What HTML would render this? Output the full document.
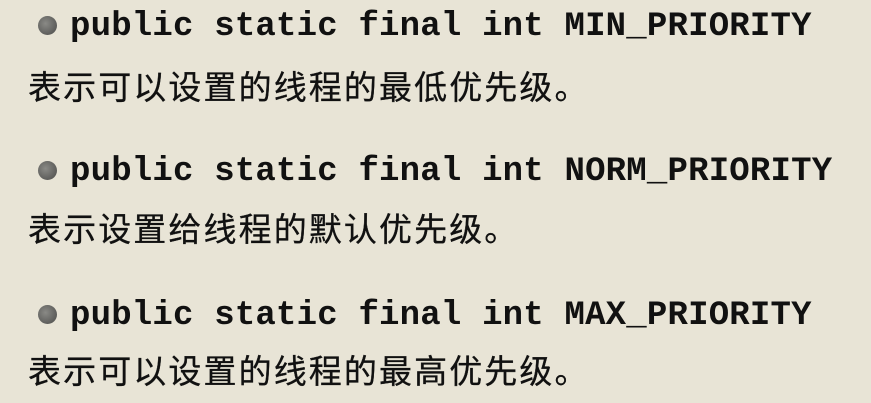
<!DOCTYPE html>
<html><head><meta charset="utf-8"><style>
body{margin:0;width:871px;height:403px;background:#e8e4d6;overflow:hidden;position:relative}
.c{position:absolute;left:70px;font:bold 34px/40px "Liberation Mono",monospace;color:#111;white-space:pre;letter-spacing:0.2px}
.z{position:absolute;left:28px;font:33px/40px "Liberation Sans","Noto Sans CJK SC",sans-serif;color:#111;letter-spacing:2.1px;white-space:pre;-webkit-text-stroke:0.3px #111}
.b{position:absolute;left:38px;width:19px;height:19px;border-radius:50%;background:radial-gradient(circle at 40% 40%,#8a8a86,#4a4a48)}
</style></head><body>
<div class="b" style="top:16px"></div><div class="c" style="top:7px">public static final int MIN_PRIORITY</div>
<div class="z" style="top:68px">表示可以设置的线程的最低优先级。</div>
<div class="b" style="top:161px"></div><div class="c" style="top:152px">public static final int NORM_PRIORITY</div>
<div class="z" style="top:210px">表示设置给线程的默认优先级。</div>
<div class="b" style="top:305px"></div><div class="c" style="top:296px">public static final int MAX_PRIORITY</div>
<div class="z" style="top:352px">表示可以设置的线程的最高优先级。</div>
</body></html>
